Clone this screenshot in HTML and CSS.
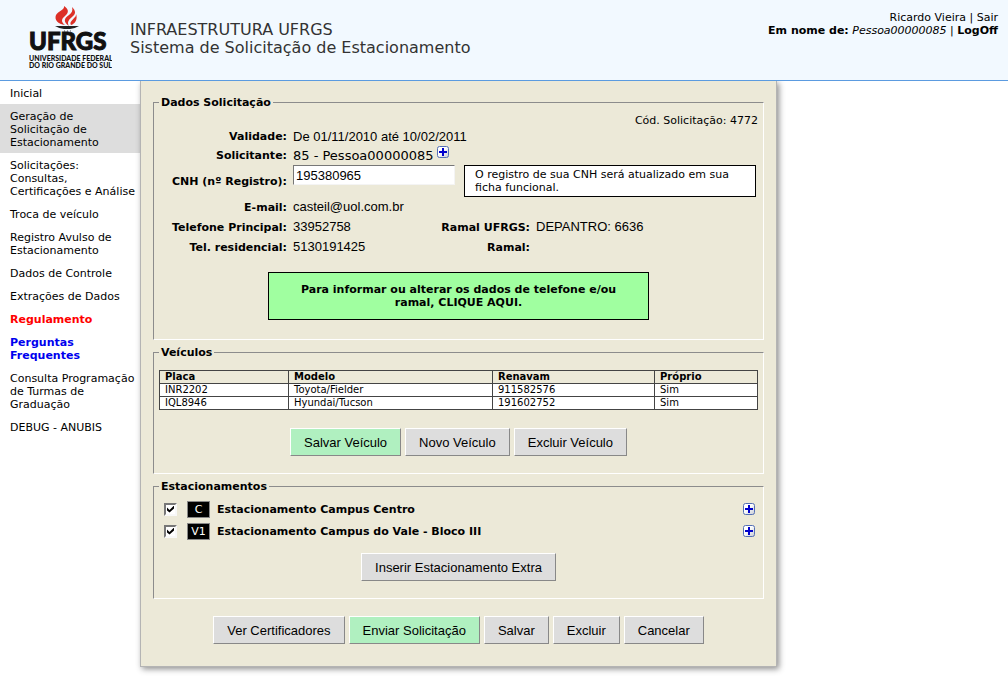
FILE: index.html
```html
<!DOCTYPE html>
<html lang="pt-BR">
<head>
<meta charset="utf-8">
<title>Sistema de Solicitação de Estacionamento</title>
<link rel="stylesheet" href="styles.css">
</head>
<body>
<svg class="defs" width="0" height="0" aria-hidden="true">
  <defs>
    <linearGradient id="plus-fill" x1="0" y1="0" x2="1" y2="1">
      <stop offset="0.4" stop-color="#ffffff"/>
      <stop offset="1" stop-color="#c4c8d4"/>
    </linearGradient>
    <symbol id="plus" viewBox="0 0 12 12">
      <rect x="0.5" y="0.5" width="11" height="11" rx="2" fill="url(#plus-fill)" stroke="#5570b4"/>
      <path d="M5 2h2v3h3v2H7v3H5V7H2V5h3z" fill="#0000cc"/>
    </symbol>
  </defs>
</svg>
<header class="header">
  <svg class="logo" width="84" height="68" viewBox="0 0 84 68" role="img" aria-label="UFRGS">
    <path d="M37 20C30 19 26 15 28 10C30 6 37 5 36 1C41 4 41 8 37 11C33 14 33 17 37 20Z" fill="#dc3027"/>
    <path d="M41 21C35 17 36 13 41 10C44 8 45 5 44 2C48 6 48 9 44 12C40 15 39 18 41 21Z" fill="#dc3027"/>
    <path d="M43 20C41 17 45 15 46 13C48 12 48 10 48 9C50 14 47 19 43 20Z" fill="#dc3027"/>
    <path d="M27 21H51Q46 24 42 24H36Q32 24 27 21Z" fill="#222"/>
    <path d="M36 26h1M39 26h1M42 26h1" stroke="#555"/>
    <text class="logo-name" x="1" y="45">UFRGS</text>
    <text class="logo-sub" x="1" y="56">UNIVERSIDADE FEDERAL</text>
    <text class="logo-sub" x="1" y="63">DO RIO GRANDE DO SUL</text>
  </svg>
  <h1 class="title">INFRAESTRUTURA UFRGS<br>Sistema de Solicitação de Estacionamento</h1>
  <div class="session">
    <div>Ricardo Vieira | <a href="#">Sair</a></div>
    <div><b>Em nome de:</b> <i>Pessoa00000085</i> | <a href="#"><b>LogOff</b></a></div>
  </div>
</header>
<div class="layout">
  <nav class="menu">
    <a href="#">Inicial</a>
    <a href="#" class="current">Geração de<br>Solicitação de<br>Estacionamento</a>
    <a href="#">Solicitações:<br>Consultas,<br>Certificações e Análise</a>
    <a href="#">Troca de veículo</a>
    <a href="#">Registro Avulso de<br>Estacionamento</a>
    <a href="#">Dados de Controle</a>
    <a href="#">Extrações de Dados</a>
    <a href="#" class="red">Regulamento</a>
    <a href="#" class="blue">Perguntas<br>Frequentes</a>
    <a href="#">Consulta Programação<br>de Turmas de<br>Graduação</a>
    <a href="#">DEBUG - ANUBIS</a>
  </nav>
  <main class="panel">
    <fieldset class="group data">
      <legend>Dados Solicitação</legend>
      <p class="code">Cód. Solicitação: 4772</p>
      <div class="row short"><span class="label">Validade:</span><span class="value">De 01/11/2010 até 10/02/2011</span></div>
      <div class="row short"><span class="label">Solicitante:</span><span class="person">85 - Pessoa00000085</span><a href="#" class="plus raised" aria-label="Detalhes do solicitante"><svg width="12" height="12"><use href="#plus"/></svg></a></div>
      <div class="row tall"><label class="label" for="cnh">CNH (nº Registro):</label><input id="cnh" type="text" value="195380965"><p class="note">O registro de sua CNH será atualizado em sua ficha funcional.</p></div>
      <div class="row"><span class="label">E-mail:</span><span class="value">casteil@uol.com.br</span></div>
      <div class="row"><span class="label">Telefone Principal:</span><span class="value first">33952758</span><span class="label second">Ramal UFRGS:</span><span class="value">DEPANTRO: 6636</span></div>
      <div class="row"><span class="label">Tel. residencial:</span><span class="value first">5130191425</span><span class="label second">Ramal:</span></div>
      <a href="#" class="callout">Para informar ou alterar os dados de telefone e/ou ramal, CLIQUE AQUI.</a>
    </fieldset>
    <fieldset class="group vehicles">
      <legend>Veículos</legend>
      <table>
        <colgroup><col class="c1"><col class="c2"><col class="c3"><col class="c4"></colgroup>
        <thead><tr><th>Placa</th><th>Modelo</th><th>Renavam</th><th>Próprio</th></tr></thead>
        <tbody>
          <tr><td>INR2202</td><td>Toyota/Fielder</td><td>911582576</td><td>Sim</td></tr>
          <tr><td>IQL8946</td><td>Hyundai/Tucson</td><td>191602752</td><td>Sim</td></tr>
        </tbody>
      </table>
      <div class="buttons">
        <button type="button" class="green">Salvar Veículo</button>
        <button type="button">Novo Veículo</button>
        <button type="button">Excluir Veículo</button>
      </div>
    </fieldset>
    <fieldset class="group parking">
      <legend>Estacionamentos</legend>
      <div class="lot"><input type="checkbox" id="lot-c" checked><span class="badge">C</span><label for="lot-c">Estacionamento Campus Centro</label><a href="#" class="plus" aria-label="Detalhes Campus Centro"><svg width="12" height="12"><use href="#plus"/></svg></a></div>
      <div class="lot"><input type="checkbox" id="lot-v" checked><span class="badge">V1</span><label for="lot-v">Estacionamento Campus do Vale - Bloco III</label><a href="#" class="plus" aria-label="Detalhes Campus do Vale"><svg width="12" height="12"><use href="#plus"/></svg></a></div>
      <div class="buttons"><button type="button">Inserir Estacionamento Extra</button></div>
    </fieldset>
    <div class="buttons actions">
      <button type="button">Ver Certificadores</button>
      <button type="button" class="green">Enviar Solicitação</button>
      <button type="button">Salvar</button>
      <button type="button">Excluir</button>
      <button type="button">Cancelar</button>
    </div>
  </main>
</div>
</body>
</html>
```
FILE: styles.css
```css
* { box-sizing: border-box; }
body {
  margin: 0;
  background: #fff;
  color: #000;
  font: 11px/13px "DejaVu Sans", Verdana, sans-serif;
}
a { color: inherit; text-decoration: none; }
p { margin: 0; }
.defs { position: absolute; }

.header {
  display: flex;
  align-items: flex-start;
  height: 81px;
  padding: 5px 10px 0 28px;
  background: #f2f9ff;
  border-bottom: 1px solid #5b9be0;
}
.logo { flex: none; margin-right: 18px; }
.logo text { font-family: Lato, sans-serif; font-weight: 900; fill: #111; }
.logo .logo-name { font-size: 24px; stroke: #111; stroke-width: 1px; }
.logo .logo-sub { font-size: 7px; }
.title {
  flex: 1;
  margin: 16px 0 0;
  font-size: 16px;
  font-weight: normal;
  line-height: 18px;
  color: #333;
}
.session { padding-top: 6px; text-align: right; }

.layout { display: flex; align-items: flex-start; padding-bottom: 9px; }
.menu { flex: none; width: 140px; }
.menu a { display: block; padding: 6px 0 4px 10px; white-space: nowrap; }
.menu .current { background: #ddd; }
.menu .red { color: #f00; font-weight: bold; }
.menu .blue { color: #00e; font-weight: bold; }

.panel {
  position: relative;
  flex: 1;
  max-width: 637px;
  padding: 15px 12px 22px 12px;
  background: #ece9d8;
  border: 1px solid #b4b4b4;
  border-top: 0;
  box-shadow: 2px 2px 6px rgba(0, 0, 0, 0.45);
  clip-path: inset(0 -12px -12px -12px);
}
.group {
  min-width: 0;
  margin: 0 0 6px;
  padding: 0 5px;
  border: 1px solid;
  border-color: #8c8c8c #fff #fff #8c8c8c;
}
legend { margin-left: 0; padding: 0 2px; font-weight: bold; }

.data { padding-bottom: 19px; }
.code { padding-top: 5px; text-align: right; }
.row { display: flex; align-items: center; min-height: 20px; }
.row.short { min-height: 19px; }
.row.tall { min-height: 32px; }
.label { flex: none; width: 128px; margin-right: 6px; font-weight: bold; text-align: right; }
.value, .row input, button { font-family: "Liberation Sans", Arial, sans-serif; font-size: 13px; }
.value { line-height: 18px; }
.value.first { width: 139px; }
.label.second { width: 98px; }
.person { font-size: 13px; }
.raised { align-self: flex-start; margin-left: 3px; }
.plus svg { display: block; }
.row input {
  align-self: flex-start;
  width: 162px;
  height: 20px;
  padding: 0 2px;
  border: 1px solid;
  border-color: #777 #f4f4f4 #f4f4f4 #777;
  background: #fff;
}
.note {
  flex: 1;
  margin: 0 2px 0 9px;
  padding: 2px 10px;
  border: 1px solid #000;
  background: #fff;
}
.callout {
  display: block;
  max-width: 381px;
  margin: 15px auto 0;
  padding: 10px 20px;
  border: 1px solid #000;
  background: #a0ffa0;
  font-weight: bold;
  text-align: center;
}

.vehicles { padding-bottom: 17px; }
table {
  width: 100%;
  margin-top: 11px;
  border-collapse: collapse;
  table-layout: fixed;
  font-size: 10px;
  line-height: 12px;
}
.c1 { width: 129px; }
.c2 { width: 204px; }
.c3 { width: 162px; }
th, td { padding: 0 5px; border: 1px solid #444; text-align: left; }
td { background: #fff; }

.buttons { display: flex; flex-wrap: wrap; justify-content: center; gap: 4px; margin-top: 18px; }
button {
  height: 28px;
  padding: 0 13px;
  border: 1px solid;
  border-color: #fff #888 #888 #fff;
  border-radius: 0;
  background: #ddd;
  color: #000;
}
button.green { background: #b0f0c0; }

.parking { padding-bottom: 17px; }
.parking legend { margin-bottom: 5px; }
.lot { display: flex; align-items: center; height: 22px; padding: 0 3px 0 5px; font-weight: bold; }
.lot input {
  appearance: none;
  display: grid;
  place-content: center;
  width: 13px;
  height: 13px;
  margin: 0 10px 0 0;
  border: 2px solid;
  border-color: #777 #f8f8f8 #f8f8f8 #777;
  background: #fff;
}
.lot input:checked::before {
  content: "";
  width: 7px;
  height: 7px;
  background: #000;
  clip-path: polygon(0 29%, 36% 64%, 100% 0, 100% 43%, 36% 100%, 0 71%);
}
.badge {
  width: 23px;
  margin-right: 7px;
  border: 1px solid #888;
  background: #000;
  color: #fff;
  font-weight: normal;
  line-height: 15px;
  text-align: center;
}
.lot label { flex: 1; }
.parking .buttons { margin-top: 11px; }
.panel .actions { margin-top: 17px; }
```
